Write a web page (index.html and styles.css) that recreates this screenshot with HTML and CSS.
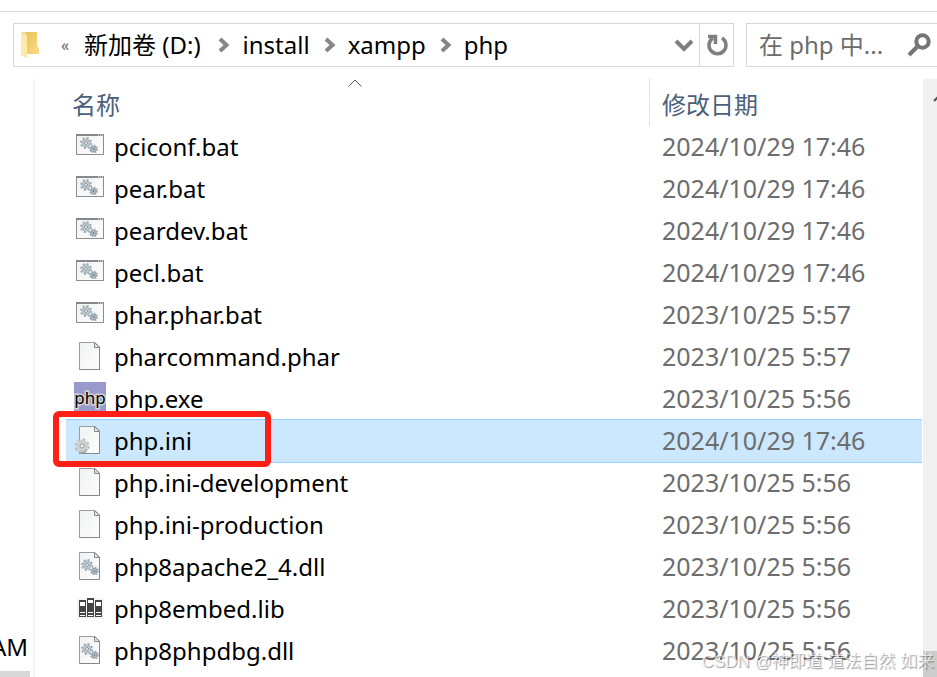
FILE: index.html
```html
<!DOCTYPE html>
<html lang="zh-CN">
<head>
<meta charset="utf-8">
<title>php</title>
<link rel="stylesheet" href="styles.css">
</head>
<body>
<svg class="defs" aria-hidden="true">
  <defs>
    <linearGradient id="paper" x1="0" y1="0" x2="1" y2="1"><stop offset="0" stop-color="#f1f2f3"/><stop offset="1" stop-color="#fdfdfd"/></linearGradient>
    <linearGradient id="fold-back" x1="0" y1="0" x2="1" y2="1"><stop offset="0" stop-color="#e9c25c"/><stop offset="1" stop-color="#fbdc84"/></linearGradient>
    <symbol id="gears" viewBox="0 0 18 16">
      <circle cx="6" cy="6" r="5" fill="none" stroke="#9eabb3" stroke-width="2" stroke-dasharray="2 1.927"/>
      <circle cx="6" cy="6" r="3.500" fill="#d6e3ea" stroke="#adbac2" stroke-width="2"/>
      <circle cx="6" cy="6" r="1.500" fill="#fff" stroke="#7f8d96" stroke-width="1"/>
      <circle cx="13.500" cy="12" r="3.500" fill="#dfe7ec" stroke="#9eabb3" stroke-width="2" stroke-dasharray="1.400 1.349"/>
      <circle cx="13.500" cy="12" r="2.500" fill="#c4d2da" stroke="#9aa7b0" stroke-width="1.500"/>
      <circle cx="13.500" cy="12" r="1" fill="#66737b"/>
    </symbol>
    <symbol id="sheet" viewBox="0 0 22 28">
      <path d="M.5.5H16L20.500 5V27.500H.5Z" fill="url(#paper)" stroke="#9a9da0"/>
      <path d="M.5 27.500H20.500V5" fill="none" stroke="#85888b"/>
      <path d="M15.500 .5V5.500H20.500Z" fill="#e4e6e8" stroke="#85888b"/>
    </symbol>
    <symbol id="bat" viewBox="0 0 32 32">
      <rect x="2.500" y="4.500" width="27" height="20" fill="url(#paper)" stroke="#8b8e91"/>
      <path d="M2 5H30" stroke="#85888c" stroke-width="2"/>
      <path d="M24 5h1M26 5h1M28 5h1" stroke="#fff"/>
      <use href="#gears" x="6" y="7" width="18" height="16"/>
    </symbol>
    <symbol id="file" viewBox="0 0 32 32"><use href="#sheet" x="5" y="2" width="22" height="28"/></symbol>
    <symbol id="dll" viewBox="0 0 32 32">
      <use href="#sheet" x="5" y="2" width="22" height="28"/>
      <use href="#gears" x="7" y="9" width="18" height="16"/>
    </symbol>
    <symbol id="ini" viewBox="0 0 32 32">
      <use href="#sheet" x="5" y="2" width="22" height="28"/>
      <circle cx="8" cy="22" r="6" fill="none" stroke="#b7babd" stroke-width="3" stroke-dasharray="2.500 2.212"/>
      <circle cx="8" cy="22" r="4" fill="#fff" stroke="#cdcfd1" stroke-width="4"/>
      <path d="M5 28a6 6 0 0 0 8-3" fill="none" stroke="#a5a8aa" stroke-width="1.500"/>
      <circle cx="8" cy="22" r="2" fill="#eef5fb" stroke="#9a9da0"/>
    </symbol>
    <symbol id="exe" viewBox="0 0 32 32">
      <rect width="32" height="32" fill="#9999cc"/>
      <text class="exe-text" x="16" y="22" text-anchor="middle">php</text>
    </symbol>
    <symbol id="lib" viewBox="0 0 32 32">
      <rect x="3" y="6" width="27" height="21" fill="#f5f5f5"/>
      <path d="M5 8h7v17H5zM13 6h7v19h-7zM21 8h7v17h-7z" fill="#454545"/>
      <path d="M6 10h5v4H6zM14 8h5v3h-5zM22 10h5v4h-5zM6 20h5v1H6zM14 20h5v1h-5zM22 20h5v1h-5zM6 23h5v1H6zM14 23h5v1h-5zM22 23h5v1h-5z" fill="#fff"/>
    </symbol>
    <symbol id="sep" viewBox="0 0 12 16"><path d="M2 2L8.500 8L2 14" fill="none" stroke="#868686" stroke-width="4"/></symbol>
  </defs>
</svg>
<div class="window">
  <header class="toolbar">
    <nav class="address" aria-label="地址">
      <svg class="folder" viewBox="0 0 20 28" aria-hidden="true">
        <path d="M5 1H16V15L18 17V23H5Z" fill="url(#fold-back)"/>
        <path d="M0 1L6 4V27.500L0 24Z" fill="#fde9a9"/>
        <path d="M0 1H5L6 4Z" fill="#f0cf76"/>
      </svg>
      <button class="more" type="button" aria-label="更多">«</button>
      <a class="crumb" href="#">新加卷 (D:)</a>
      <svg class="sep" aria-hidden="true"><use href="#sep"/></svg>
      <a class="crumb" href="#">install</a>
      <svg class="sep" aria-hidden="true"><use href="#sep"/></svg>
      <a class="crumb" href="#">xampp</a>
      <svg class="sep" aria-hidden="true"><use href="#sep"/></svg>
      <a class="crumb" href="#">php</a>
      <button class="drop" type="button" aria-label="以前的位置"><svg width="20" height="14" viewBox="0 0 20 14"><path d="M2 3L10 11L18 3" fill="none" stroke="#7f7f7f" stroke-width="4"/></svg></button>
      <button class="refresh" type="button" aria-label="刷新"><svg width="22" height="24" viewBox="0 0 22 24"><path d="M16 5A8.500 8.500 0 1 1 7 5" fill="none" stroke="#7f7f7f" stroke-width="3.500"/><path d="M2 3.500H9.500V11" fill="none" stroke="#7f7f7f" stroke-width="3.500"/></svg></button>
    </nav>
    <form class="search">
      <input type="text" aria-label="搜索" placeholder="在 php 中...">
      <button type="button" aria-label="搜索"><svg width="24" height="24" viewBox="0 0 24 24"><circle cx="15.500" cy="8.500" r="6.200" fill="none" stroke="#757575" stroke-width="4"/><path d="M11 13L2 22" stroke="#757575" stroke-width="4"/></svg></button>
    </form>
  </header>
  <div class="body">
    <aside class="tree"><span class="tree-item">AM</span><span class="tree-thumb"></span></aside>
    <main class="list">
      <svg class="sort" viewBox="0 0 14 8" aria-hidden="true"><path d="M.5 7.500L7 1L13.500 7.500" fill="none" stroke="#5a5a5a"/></svg>
      <table>
        <thead><tr><th class="name" scope="col">名称</th><th class="date" scope="col">修改日期</th></tr></thead>
        <tbody>
          <tr><td><span class="item"><svg><use href="#bat"/></svg>pciconf.bat</span></td><td>2024/10/29 17:46</td></tr>
          <tr><td><span class="item"><svg><use href="#bat"/></svg>pear.bat</span></td><td>2024/10/29 17:46</td></tr>
          <tr><td><span class="item"><svg><use href="#bat"/></svg>peardev.bat</span></td><td>2024/10/29 17:46</td></tr>
          <tr><td><span class="item"><svg><use href="#bat"/></svg>pecl.bat</span></td><td>2024/10/29 17:46</td></tr>
          <tr><td><span class="item"><svg><use href="#bat"/></svg>phar.phar.bat</span></td><td>2023/10/25 5:57</td></tr>
          <tr><td><span class="item"><svg><use href="#file"/></svg>pharcommand.phar</span></td><td>2023/10/25 5:57</td></tr>
          <tr><td><span class="item"><svg><use href="#exe"/></svg>php.exe</span></td><td>2023/10/25 5:56</td></tr>
          <tr class="selected"><td><span class="item"><svg><use href="#ini"/></svg>php.ini</span><span class="mark"></span></td><td>2024/10/29 17:46</td></tr>
          <tr><td><span class="item"><svg><use href="#file"/></svg>php.ini-development</span></td><td>2023/10/25 5:56</td></tr>
          <tr><td><span class="item"><svg><use href="#file"/></svg>php.ini-production</span></td><td>2023/10/25 5:56</td></tr>
          <tr><td><span class="item"><svg><use href="#dll"/></svg>php8apache2_4.dll</span></td><td>2023/10/25 5:56</td></tr>
          <tr><td><span class="item"><svg><use href="#lib"/></svg>php8embed.lib</span></td><td>2023/10/25 5:56</td></tr>
          <tr><td><span class="item"><svg><use href="#dll"/></svg>php8phpdbg.dll</span></td><td>2023/10/25 5:56</td></tr>
        </tbody>
      </table>
    </main>
    <div class="scroll"><svg viewBox="0 0 14 10" aria-hidden="true"><path d="M11 8L17 2" fill="none" stroke="#505050" stroke-width="2"/></svg><span class="thumb"></span></div>
  </div>
</div>
<div class="watermark">CSDN @神即道 道法自然 如来</div>
</body>
</html>
```
FILE: styles.css
```css
* { box-sizing: border-box; }
body {
  margin: 0;
  background: #fff;
  color: #000;
  font: 24px/42px "Noto Sans", "Noto Sans CJK SC", sans-serif;
  overflow: hidden;
}
button { border: 0; padding: 0; background: none; font: inherit; color: inherit; display: flex; align-items: center; justify-content: center; }
.defs { position: absolute; width: 0; height: 0; }
.window { height: 100vh; display: flex; flex-direction: column; padding-top: 11px; }
.toolbar { display: flex; gap: 12px; padding: 11px 0 12px 13px; border-top: 1px solid #d9d9d9; }
.address { flex: 1; height: 44px; display: flex; align-items: center; border: 1px solid #d9d9d9; padding-left: 7px; }
.folder { width: 20px; height: 28px; }
.more { width: 24px; margin: 0 7px 0 12px; font-size: 16px; line-height: 24px; color: #666; }
.crumb { color: #000; text-decoration: none; white-space: nowrap; }
.sep { width: 12px; height: 16px; margin: 0 13px 0 17px; }
.sep ~ .sep { margin: 0 12px 0 14px; }
.drop { width: 30px; height: 42px; margin-left: auto; }
.refresh { width: 34px; height: 42px; border-left: 1px solid #d9d9d9; }
.search { width: 191px; height: 44px; display: flex; align-items: center; border: 1px solid #d9d9d9; border-right: 0; padding-left: 12px; }
.search input { flex: 1; min-width: 0; height: 42px; border: 0; padding: 0; outline: 0; background: none; font: inherit; color: #6d6d6d; }
.search input::placeholder { color: #6d6d6d; opacity: 1; }
.search button { width: 36px; height: 42px; }
.body { flex: 1; min-height: 0; display: flex; }
.tree { width: 35px; border-right: 2px solid #f5f5f5; display: flex; flex-direction: column; align-items: flex-start; justify-content: flex-end; overflow: hidden; }
.tree-item { width: 28px; display: flex; justify-content: flex-end; }
.tree-thumb { width: 30px; height: 6px; margin-top: 3px; background: #d9d9d9; }
.list { flex: 1; min-width: 0; position: relative; padding: 0 1px 0 31px; overflow: hidden; }
.sort { position: absolute; left: 313px; top: 0; width: 14px; height: 8px; }
table { width: 100%; border-collapse: separate; border-spacing: 0; table-layout: fixed; }
th { height: 47px; padding: 5px 0 0 6px; text-align: left; font-weight: 400; color: #4c607a; }
th.date { width: 273px; padding-left: 13px; box-shadow: inset 1px 0 #e2e2e2; }
td { height: 42px; padding: 0; white-space: nowrap; position: relative; }
td:last-child { padding-left: 13px; font-size: 25px; line-height: 40px; vertical-align: top; color: #6d6d6d; }
td:first-child { padding-left: 8px; }
.item { display: flex; align-items: center; gap: 8px; height: 42px; }
.item svg { width: 32px; height: 32px; flex: none; margin-bottom: 2px; }
.exe-text { font: 17px "Noto Sans", sans-serif; fill: #000; stroke: #d4d4d4; stroke-width: 3px; paint-order: stroke; }
.selected td { background: #cce8ff; box-shadow: 0 -1px #99d1ff, 0 1px #99d1ff; }
.mark { position: absolute; z-index: 1; left: -13px; top: -9px; width: 218px; height: 56px; border: 6px solid #ff2015; border-radius: 6px; }
.scroll { width: 14px; background: #f0f0f0; display: flex; flex-direction: column; justify-content: space-between; overflow: hidden; }
.scroll svg { width: 14px; height: 10px; margin-top: 14px; }
.thumb { height: 26px; background: #cdcdcd; }
.watermark { position: absolute; right: 3px; bottom: 2px; z-index: 2; font-family: "Liberation Sans", "Noto Sans CJK SC", sans-serif; font-size: 17px; line-height: 26px; color: rgba(255, 255, 255, 0.7); text-shadow: 1px 1px 1px rgba(0, 0, 0, 0.4); white-space: nowrap; }
```
